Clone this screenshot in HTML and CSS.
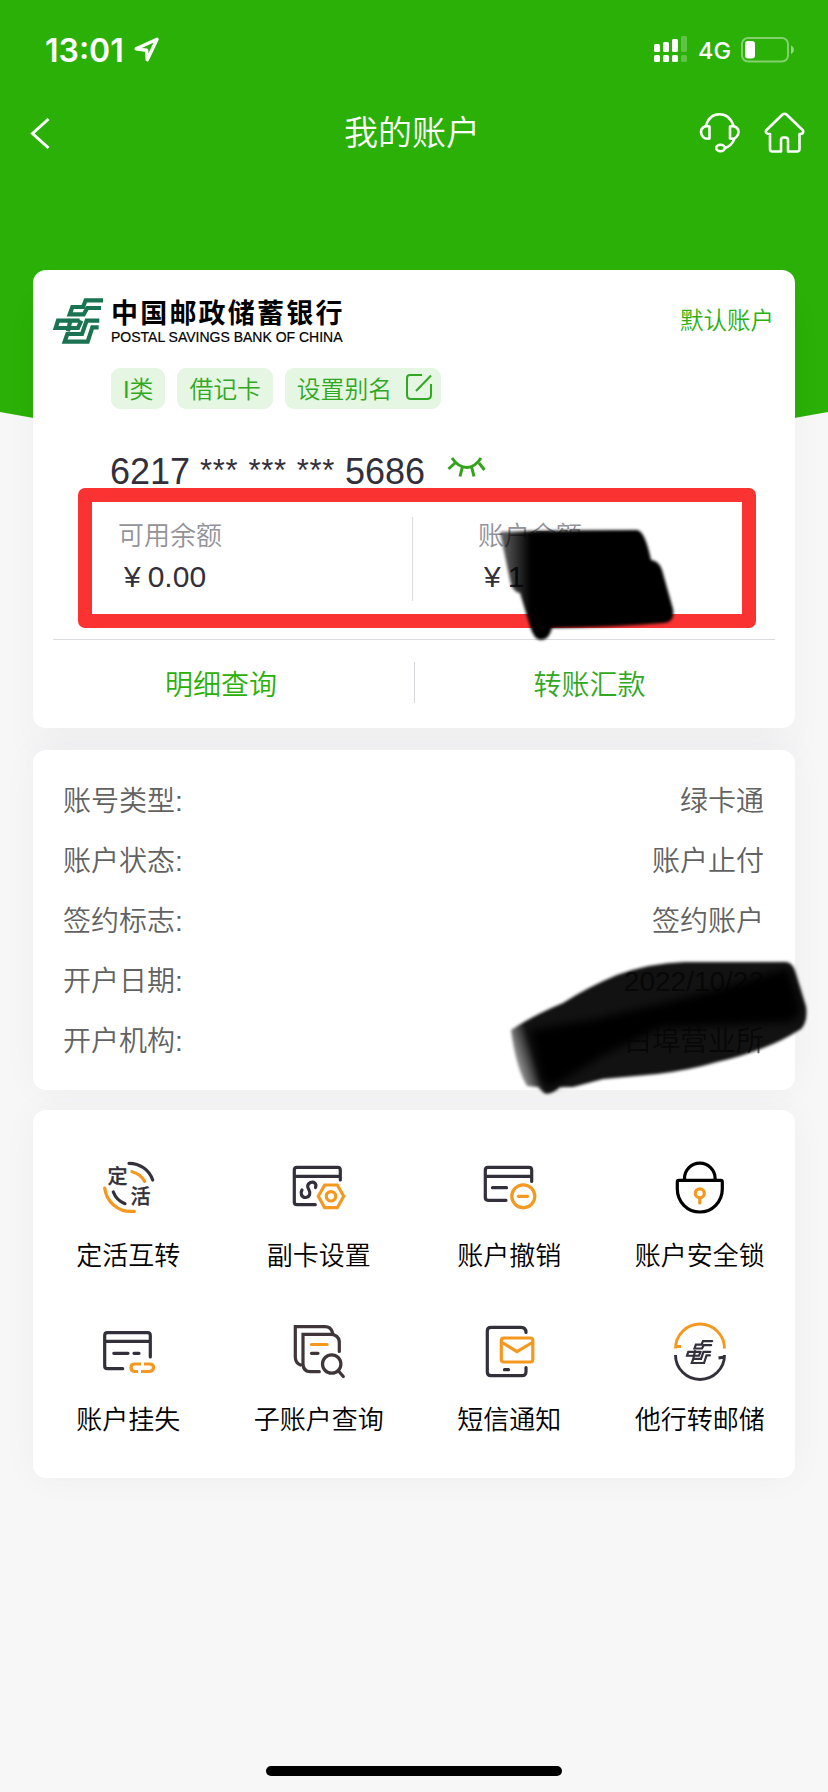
FILE: index.html
```
<!DOCTYPE html>
<html lang="zh-CN">
<head>
<meta charset="utf-8">
<title>我的账户</title>
<link rel="stylesheet" href="styles.css">
</head>
<body>
<svg class="defs" width="0" height="0">
  <symbol id="psbc" viewBox="0 0 192 180">
    <g fill="none" stroke="currentColor" stroke-width="12.500">
      <path d="M162 31H110L102 51H70L62 73H104L115 54H156"/>
      <path d="M92 92H27L20 114H87L97 92"/>
      <path d="M151 92H113L99 132H55L47 155H116L130 112H149"/>
      <path d="M65 87L57 124"/>
    </g>
  </symbol>
</svg>
<div class="page">
  <header class="header">
    <div class="status">
      <span class="clock">13:01</span>
      <svg class="arrow" width="26" height="26" viewBox="0 0 26 26"><path d="M2.2 11.8L23 2.2L13.3 22.8L12.6 13.2Z" fill="none" stroke="#fff" stroke-width="3.4" stroke-linejoin="round"/></svg>
      <svg class="signal" width="34" height="28" viewBox="0 0 34 28" fill="#fff">
        <rect x="0" y="8" width="6" height="8" rx="1.5"/><rect x="9" y="6" width="6" height="10" rx="1.5"/><rect x="18" y="3" width="6" height="13" rx="1.5"/><rect x="27" y="0" width="6" height="16" rx="1.5" opacity=".25"/>
        <rect x="0" y="19" width="6" height="7" rx="1.5"/><rect x="9" y="19" width="6" height="7" rx="1.5"/><rect x="18" y="19" width="6" height="7" rx="1.5"/><rect x="27" y="19" width="6" height="7" rx="1.5" opacity=".25"/>
      </svg>
      <span class="net">4G</span>
      <svg class="battery" width="54" height="26" viewBox="0 0 54 26"><rect x="1" y="1" width="46" height="23.5" rx="6" fill="none" stroke="#fff" stroke-opacity=".42" stroke-width="2"/><rect x="4" y="4" width="10" height="17.5" rx="3" fill="#fff"/><path d="M50 8.5a4.6 4.6 0 0 1 0 8.5z" fill="#fff" opacity=".5"/></svg>
    </div>
    <nav class="nav">
      <svg class="back" width="22" height="34" viewBox="0 0 22 34"><path d="M19.500 3L3.500 17.500L19.500 32" fill="none" stroke="#fff" stroke-width="3"/></svg>
      <h1 class="title">我的账户</h1>
      <svg class="service" width="42" height="42" viewBox="0 0 42 42" fill="none" stroke="#fff" stroke-width="2.600"><path d="M7 14C9 6 14 2.200 20.500 2.200S32 6 34.500 14M35.500 27C33 32 30 35 26 36"/><path d="M10.500 14.500V26.500C5 27.500 2 24 2 20S5 13.500 10.500 14.500ZM31 14.500V26.500C36.500 27.500 39.500 24 39.500 20S36.500 13.500 31 14.500Z" stroke-linejoin="round"/><ellipse cx="21.500" cy="36" rx="4.300" ry="3.200"/></svg>
      <svg class="home" width="42" height="42" viewBox="0 0 42 42" fill="none" stroke="#fff" stroke-width="2.600" stroke-linejoin="round"><path d="M18.500 2.500Q20.500 1 22.500 2.500L39 18.500Q40 22 36 22H35.500V37Q35.500 39.500 33 39.500H24V28Q24 25.500 21.500 25.500H19.500Q17 25.500 17 28V39.500H8.500Q6 39.500 6 37V22Q1 22 2 18.500Z"/></svg>
    </nav>
  </header>

  <main class="content">
    <section class="card account">
      <div class="bank">
        <svg class="logo" width="64" height="60"><use href="#psbc"/></svg>
        <div class="bank-name">
          <span class="bank-cn">中国邮政储蓄银行</span>
          <span class="bank-en">POSTAL SAVINGS BANK OF CHINA</span>
        </div>
        <span class="default">默认账户</span>
      </div>
      <div class="tags">
        <span class="tag">I类</span>
        <span class="tag">借记卡</span>
        <span class="tag">设置别名<svg class="edit" width="28" height="28" viewBox="0 0 28 28" fill="none" stroke="#30a822" stroke-width="2"><path d="M17 2H5Q2 2 2 5V22Q2 26 6 26H22Q26 26 26 22V11M26 2.500L11 18"/></svg></span>
      </div>
      <div class="number"><span>6217</span><span class="stars">***</span><span class="stars">***</span><span class="stars">***</span><span class="tail">5686</span>
        <svg class="eye" width="40" height="22" viewBox="0 0 40 22" fill="none" stroke="#32a31a" stroke-width="3"><path d="M5 1C9 7 14 10.500 20 10.500S30 7 34 1M8 6L1.500 12M15.500 9.500L13 19.500M24.500 9.500L27 19.500M32 6L37.500 13"/></svg>
      </div>
      <div class="balances">
        <div class="balance"><span class="label">可用余额</span><span class="amount"><span>¥</span><span>0.00</span></span></div>
        <div class="balance second"><span class="label">账户余额</span><span class="amount"><span>¥</span><span>1</span></span></div>
      </div>
      <div class="actions">
        <a class="action">明细查询</a>
        <a class="action transfer">转账汇款</a>
      </div>
    </section>

    <section class="card details">
      <div class="row"><span>账号类型:</span><span>绿卡通</span></div>
      <div class="row"><span>账户状态:</span><span>账户止付</span></div>
      <div class="row"><span>签约标志:</span><span>签约账户</span></div>
      <div class="row"><span>开户日期:</span><span>2022/10/23</span></div>
      <div class="row"><span>开户机构:</span><span>白埠营业所</span></div>
    </section>

    <section class="card services">
      <div class="item">
        <svg class="icon" viewBox="0 0 64 64"><path class="o" d="M36 16.700Q44 18.500 48.700 26.300M8.700 33C10 46 22 58 38.300 56.300"/><path d="M33 8.300C44 8.500 53 14.500 56.700 25M17.300 37Q20.500 45.500 29 48.700"/><text x="11.500" y="29">定</text><text x="34.500" y="49">活</text></svg>
        <span>定活互转</span>
      </div>
      <div class="item">
        <svg class="icon" viewBox="0 0 64 64"><path d="M53.300 25V15Q53.300 12.300 50.600 12.300H10Q7.300 12.300 7.300 15V47Q7.300 49.700 10 49.700H28.300M7.300 21.300H53.300"/><path d="M28.500 32.500C30 28.500 26.500 26 23.500 27.500C19.500 29.500 20.500 32.500 22 35C24 38.500 22.500 42 19 42.500C14.500 42.800 13 38 15 35"/><path class="o" d="M31.300 41.300L37.700 30H50.300L56.700 41.300L50.300 52.700H37.700Z"/><circle class="o" cx="44" cy="41.300" r="4.700"/></svg>
        <span>副卡设置</span>
      </div>
      <div class="item">
        <svg class="icon" viewBox="0 0 64 64"><path d="M54.700 26.500V15Q54.700 12.300 52 12.300H11Q8.300 12.300 8.300 15V42.600Q8.300 45.300 11 45.300H29M8.300 21.300H54.700M15.500 32.700H29.500"/><circle class="o" cx="46.300" cy="41.300" r="11.500"/><path class="o" d="M41.500 41.300H50.500"/></svg>
        <span>账户撤销</span>
      </div>
      <div class="item">
        <svg class="icon" viewBox="0 0 64 64"><g class="black"><path d="M10.800 25.300H52.800Q54.300 25.300 54.300 27V34A22.500 23 0 0 1 9.300 34V27Q9.300 25.300 10.800 25.300ZM16.500 25V23.500A15.300 15.300 0 0 1 47.100 23.500V25"/></g><circle class="o" cx="31.800" cy="38.300" r="4.500"/><path class="o" d="M31.800 43V48"/></svg>
        <span>账户安全锁</span>
      </div>
      <div class="item">
        <svg class="icon" viewBox="0 0 64 64"><path d="M54.300 38V16.500Q54.300 13.700 51.500 13.700H11.500Q8.700 13.700 8.700 16.500V47Q8.700 49.700 11.500 49.700H26.700M8.700 22.300H54.300M17.800 34.300H32M38 34.300H43"/><path class="o flat" d="M45 45H38.500Q35 45 35 48.500T38.500 52.500H42M48 45H53.500Q57.500 45 57.500 48.500T53.500 52.500H45"/></svg>
        <span>账户挂失</span>
      </div>
      <div class="item">
        <svg class="icon brown" viewBox="0 0 64 64"><path d="M45.700 14Q44 7.700 38 7.700H8.300V38Q8.300 44 13.500 46M52.300 32.500V22.500Q51.500 15.300 43 15.300H16V44.500Q16 52.700 23.500 52.700H32.300M24.500 34.300H31"/><circle cx="44.700" cy="45" r="9.200"/><path d="M51.500 52L56.300 57.500"/><path class="o" d="M24.500 25.500H40"/></svg>
        <span>子账户查询</span>
      </div>
      <div class="item">
        <svg class="icon" viewBox="0 0 64 64"><path d="M49 13.500Q49 8.300 44 8.300H14Q10.300 8.300 10.300 12V53Q10.300 56.700 14 56.700H45Q49 56.700 49 52.500V48.500M27.500 50.700H31.500"/><rect class="o" x="24.300" y="19" width="31.500" height="24" rx="2.500"/><path class="o" d="M26 24L40 32.700L54.500 24"/></svg>
        <span>短信通知</span>
      </div>
      <div class="item">
        <svg class="icon" viewBox="0 0 64 64"><path class="o thin flat" d="M7.500 29.500A24.500 24.500 0 0 1 56.500 29.500M7.500 27.500H13"/><path class="thin flat" d="M7.500 36A24.500 24.500 0 0 0 56.500 36M56.500 38L50.500 39"/><g color="#33303c"><use href="#psbc" x="15.500" y="16.500" width="34" height="32"/></g></svg>
        <span>他行转邮储</span>
      </div>
    </section>
  </main>

  <div class="home-bar"></div>

  <svg class="marks" width="828" height="1792" viewBox="0 0 828 1792">
    <defs>
      <filter id="soft" x="-10%" y="-10%" width="120%" height="120%"><feGaussianBlur stdDeviation="1.800"/></filter>
      <filter id="softer" x="-20%" y="-20%" width="140%" height="140%"><feGaussianBlur stdDeviation="4"/></filter>
      <linearGradient id="fade1" gradientUnits="userSpaceOnUse" x1="500" y1="0" x2="531" y2="0"><stop offset="0" stop-opacity=".6"/><stop offset="1"/></linearGradient>
      <linearGradient id="fade2" gradientUnits="userSpaceOnUse" x1="512" y1="1060" x2="534" y2="1053"><stop offset="0" stop-opacity=".3"/><stop offset="1" stop-opacity=".93"/></linearGradient>
    </defs>
    <rect x="85" y="495" width="664" height="126" fill="none" stroke="#fa3232" stroke-width="14" stroke-linejoin="round"/>
    <path filter="url(#soft)" fill="url(#fade1)" d="M500 532Q560 530 637 530Q645 531 651 560Q659 561 662 570L673 609Q675 622 664 623Q615 627 552 628Q549 640 541 640Q534 640 530 626L520 593Q512 592 510 580Z"/>
    <path filter="url(#soft)" fill="url(#fade2)" d="M511 1030Q534 1015 563 1003Q588 987 617 975Q650 963 685 962H785Q792 962 795 971L806 1007Q808 1022 801 1029Q782 1041 763 1048Q740 1057 717 1062Q690 1070 657 1074L603 1079L573 1087L560 1087Q550 1096 544 1093L538 1087L527 1086Q516 1068 511 1030Z"/>
    <path filter="url(#softer)" d="M530 1030L600 1018L700 994L788 968L801 1010L793 1022L660 1028L602 1056L552 1087L542 1083Z"/>
  </svg>
</div>
</body>
</html>
```
FILE: styles.css
```
* { box-sizing: border-box; }
body {
  margin: 0;
  background: #f7f7f7;
  font-family: "Liberation Sans", "Noto Sans CJK SC", sans-serif;
  font-weight: 350;
  color: #000;
}
.defs { position: absolute; }
.page {
  position: relative;
  width: 828px;
  height: 1792px;
  overflow: hidden;
  background: #f7f7f7;
}
.header {
  height: 490px;
  background: #2ab006;
  clip-path: polygon(0 0, 100% 0, 100% 412px, 50% 486px, 0 412px);
  color: #fff;
}
.status {
  display: flex;
  align-items: center;
  height: 100px;
  padding: 0 33px 0 45px;
  font-family: Inter, sans-serif;
}
.clock { width: 81px; font-size: 32px; font-weight: 600; white-space: nowrap; }
.arrow { margin-left: 8px; }
.signal { margin-left: auto; }
.net { width: 34px; margin: 1px 9px 0 10px; font-size: 23.500px; font-weight: 500; }
.nav {
  display: flex;
  align-items: center;
  height: 65px;
  padding: 0 22px 0 29px;
}
.title {
  margin: 0 0 0 293px;
  font-size: 34px;
  font-weight: 350;
  line-height: 50px;
}
.service { margin-left: auto; }
.home { margin-left: 23px; }

.content {
  position: relative;
  display: flex;
  flex-direction: column;
  gap: 22px;
  margin-top: -220px;
  padding: 0 33px;
}
.card {
  border-radius: 13px;
  background: #fff;
  box-shadow: 0 0 36px rgba(60, 60, 90, .04);
}
.account { height: 458px; padding: 20px 20px 0; box-shadow: 0 30px 36px rgba(60, 60, 90, .03); }
.bank { display: flex; height: 60px; }
.logo { margin-left: -4px; color: #1a7352; }
.bank-name { display: flex; flex-direction: column; width: 250px; margin-left: -2px; padding-top: 9px; }
.bank-cn {
  font-size: 27px;
  font-weight: 700;
  line-height: 31px;
  letter-spacing: 2.200px;
  white-space: nowrap;
}
.bank-en { font-size: 14px; font-weight: 400; line-height: 14px; white-space: nowrap; -webkit-text-stroke: .2px #000; }
.default { margin-left: auto; padding: 13px 1px 0 0; font-size: 23.500px; line-height: 36px; color: #2ab00f; }
.tags { display: flex; gap: 12px; margin: 18px 0 0 58px; }
.tag {
  display: flex;
  align-items: center;
  gap: 13px;
  height: 41px;
  padding: 0 12px 3px;
  border-radius: 9px;
  background: #e5f6e2;
  font-size: 23.800px;
  color: #30a822;
}
.edit { margin: 0 -4px 0 0; }
.number {
  display: flex;
  align-items: flex-start;
  height: 41px;
  margin: 41px 0 0 57px;
  font-size: 36px;
  line-height: 44px;
  color: #33303c;
}
.stars { margin: -1px 0 0 10px; font-size: 31px; letter-spacing: .7px; }
.tail { margin-left: 10px; }
.eye { margin: 7px 0 0 22px; }
.balances {
  display: flex;
  height: 149px;
  padding: 24px 0 41px;
  border-bottom: 1px solid #dcdce0;
}
.balance {
  display: flex;
  flex-direction: column;
  width: 359px;
  margin-top: 2px;
  height: 84px;
  padding-left: 65px;
}
.balance.second { border-left: 1px solid #dcdce0; padding-left: 65px; }
.label { font-size: 26px; line-height: 38px; color: #929299; }
.amount { display: flex; gap: 7px; padding-left: 6px; font-size: 30px; line-height: 43px; color: #33303c; }
.actions { display: flex; padding: 22px 0 0; }
.action {
  width: 361px;
  height: 41px;
  padding-right: 25px;
  font-size: 28px;
  line-height: 47px;
  text-align: center;
  color: #2ab006;
}
.action.transfer { border-left: 1px solid #d8d8dc; padding: 0 11px 0 0; color: #30a822; }

.details { height: 340px; padding: 22px 31px 0 30px; }
.row {
  display: flex;
  justify-content: space-between;
  height: 60px;
  font-size: 28px;
  line-height: 60px;
  color: #626262;
}
.details + .services { margin-top: -2px; }
.services {
  display: grid;
  grid-template-columns: repeat(4, 1fr);
  grid-auto-rows: 164px;
  height: 368px;
  padding-top: 45px;
}
.item {
  display: flex;
  flex-direction: column;
  align-items: center;
  font-size: 26px;
  line-height: 38px;
}
.icon {
  width: 64px;
  height: 64px;
  margin-bottom: 18px;
  fill: none;
  stroke: #33303c;
  stroke-width: 3.200;
  stroke-linecap: round;
}
.icon.brown { stroke: #403539; }
.icon .o { stroke: #f5981f; }
.icon .thin { stroke-width: 2.900; }
.icon .flat { stroke-linecap: butt; }
.icon .black { stroke: #000; }
.icon text { font-size: 20px; font-weight: 500; fill: #33303c; stroke: #33303c; stroke-width: .3; }
.home-bar {
  position: absolute;
  left: 266px;
  bottom: 16px;
  width: 296px;
  height: 10px;
  border-radius: 5px;
  background: #000;
}
.marks { position: absolute; left: 0; top: 0; }
```
